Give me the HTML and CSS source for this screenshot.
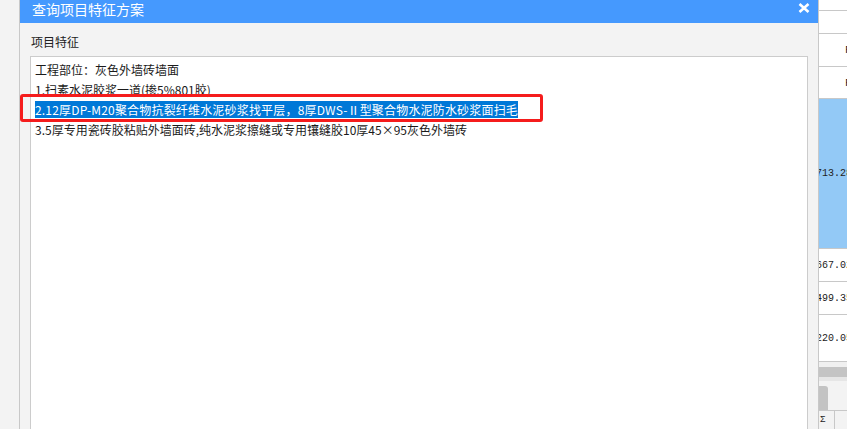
FILE: index.html
```html
<!DOCTYPE html>
<html lang="zh-CN">

<head>
    <meta charset="UTF-8">
    <title>查询项目特征方案</title>
    <link rel="stylesheet" href="styles.css">
</head>

<body>
    <div class="app">
        <div class="gutter"></div>

        <div class="dialog">
            <div class="titlebar">
                <span class="title">查询项目特征方案</span>
                <svg class="close" width="12" height="10" viewBox="0 0 12 10">
                    <path d="M1.5 1 L10.5 9 M10.5 1 L1.5 9" stroke="#fff" stroke-width="2.6" fill="none"/>
                </svg>
            </div>
            <div class="dialog-body">
                <div class="field-label">项目特征</div>
                <div class="textbox">
                    <div class="line">工程部位：灰色外墙砖墙面</div>
                    <div class="line">1.扫素水泥胶浆一道(掺5%801胶)</div>
                    <div class="line"><span class="selected">2.12厚DP-M20聚合物抗裂纤维水泥砂浆找平层，8厚DWS-Ⅱ型聚合物水泥防水砂浆面扫毛</span></div>
                    <div class="line">3.5厚专用瓷砖胶粘贴外墙面砖,纯水泥浆擦缝或专用镶缝胶10厚45×95灰色外墙砖</div>
                </div>
            </div>
            <!-- annotation box over the selected line -->
            <div class="mark"></div>
        </div>

        <div class="grid-side">
            <div class="row r-top"></div>
            <div class="row r-head"></div>
            <div class="row r-32"><span class="peek">F</span></div>
            <div class="row r-31"><span class="peek">F</span></div>
            <div class="row r-sel"><span class="num">713.28</span></div>
            <div class="row r-32"><span class="num">667.02</span></div>
            <div class="row r-32"><span class="num">499.35</span></div>
            <div class="row r-46"><span class="num">220.05</span></div>
            <div class="gap"></div>
            <div class="hscroll"></div>
            <div class="gap-2"></div>
            <div class="tabs"><div class="tab"></div></div>
            <div class="footer"><span class="sum">Σ</span></div>
        </div>
    </div>
</body>

</html>
```

FILE: styles.css
```css
body {
    margin: 0;
    background: #f3f3f3;
    font-family: "Noto Sans CJK SC", "Microsoft YaHei", sans-serif;
    overflow: hidden;
}

.app {
    display: flex;
    height: 429px;
}

.gutter {
    width: 19px;
    background: #f3f3f3;
}

.dialog {
    position: relative;
    width: 798px;
    border-left: 1px solid #c8c8c8;
    display: flex;
    flex-direction: column;
    background: #f3f3f3;
}

.titlebar {
    height: 23px;
    background: #4599fe;
    color: #fff;
    display: flex;
    justify-content: space-between;
    align-items: flex-start;
    padding: 0 8px 0 12px;
}

.title {
    font-size: 14px;
    line-height: 18px;
}

.close {
    margin-top: 3px;
}

.dialog-body {
    flex: 1;
    display: flex;
    flex-direction: column;
    padding: 0 10px;
}

.field-label {
    font-size: 12px;
    line-height: 17px;
    color: #222;
    padding: 10px 0 6px 1px;
}

.textbox {
    flex: 1;
    background: #fff;
    border: 1px solid #cccccc;
    border-bottom: none;
    padding: 3px 4px;
    font-size: 12px;
    color: #1a1a1a;
}

.line {
    line-height: 20px;
    white-space: nowrap;
}

.selected {
    background: #0078d7;
    color: #fff;
    letter-spacing: 0.18px;
}

.mark {
    position: absolute;
    left: 0;
    top: 94px;
    width: 517px;
    height: 22px;
    border: 3px solid #f51c1c;
    border-radius: 3px;
}

.grid-side {
    width: 28px;
    border-left: 1px solid #c8c8c8;
    background: #fff;
    font-family: "Liberation Mono", monospace;
    font-size: 10px;
    color: #222;
    overflow: hidden;
}

.row {
    border-bottom: 1px solid #c8c8c8;
    display: flex;
    align-items: center;
    white-space: nowrap;
    overflow: hidden;
}

.r-top { height: 10px; }
.r-head { height: 22px; }
.r-32 { height: 32px; }
.r-31 { height: 31px; }
.r-46 { height: 46px; }

.r-sel {
    height: 149px;
    background: #93c9f6;
}

.num {
    margin-left: -3px;
}

.peek {
    margin-left: 26px;
    font-size: 11px;
}

.gap {
    height: 5px;
    background: #f0f0f0;
}

.hscroll {
    height: 10px;
    background: #c4c4c4;
}

.gap-2 {
    height: 4px;
    background: #e6e6e6;
}

.tabs {
    height: 29px;
    background: #f3f3f3;
    border-bottom: 1px solid #c8c8c8;
    display: flex;
    align-items: flex-end;
}

.tab {
    width: 9px;
    height: 24px;
    background: #c3c3c3;
    border-radius: 0 3px 0 0;
}

.footer {
    height: 18px;
    display: flex;
    align-items: center;
    background: #f3f3f3;
}

.sum {
    width: 14px;
    height: 18px;
    border-right: 1px solid #c8c8c8;
    font-size: 9px;
    line-height: 18px;
    padding-left: 1px;
}
```
